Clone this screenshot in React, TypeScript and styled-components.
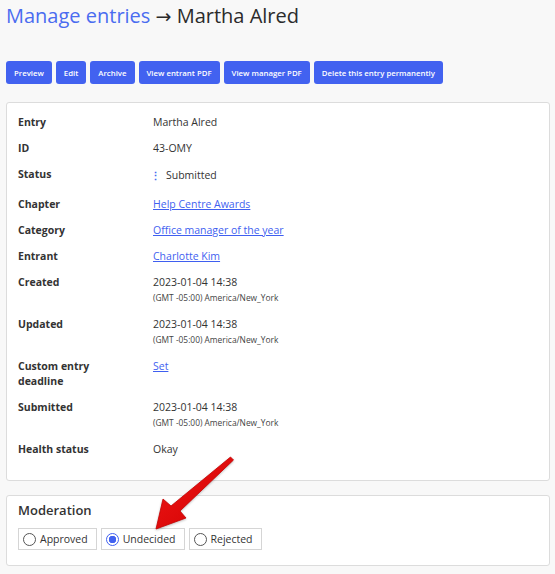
import React from 'react';
import styled, { createGlobalStyle } from 'styled-components';

const GlobalStyle = createGlobalStyle`
	html, body {
		margin: 0;
		padding: 0;
		background: #f8f8f8;
		font-family: 'Open Sans', 'Noto Sans', sans-serif;
		color: #333;
	}
`;

type Row = {
	label: string;
	value: string;
	sub?: string;
	link?: boolean;
	status?: boolean;
};

const ROWS: Row[] = [
	{ label: 'Entry', value: 'Martha Alred' },
	{ label: 'ID', value: '43-OMY' },
	{ label: 'Status', value: 'Submitted', status: true },
	{ label: 'Chapter', value: 'Help Centre Awards', link: true },
	{ label: 'Category', value: 'Office manager of the year', link: true },
	{ label: 'Entrant', value: 'Charlotte Kim', link: true },
	{ label: 'Created', value: '2023-01-04 14:38', sub: '(GMT -05:00) America/New_York' },
	{ label: 'Updated', value: '2023-01-04 14:38', sub: '(GMT -05:00) America/New_York' },
	{ label: 'Custom entry deadline', value: 'Set', link: true },
	{ label: 'Submitted', value: '2023-01-04 14:38', sub: '(GMT -05:00) America/New_York' },
	{ label: 'Health status', value: 'Okay' },
];

const BUTTONS = ['Preview', 'Edit', 'Archive', 'View entrant PDF', 'View manager PDF', 'Delete this entry permanently'];

const OPTIONS = ['Approved', 'Undecided', 'Rejected'];

const App = () => {
	return (
		<Page>
			<GlobalStyle />
			<Title>
				<a href="#">Manage entries</a> <TitleArrow>→</TitleArrow> Martha Alred
			</Title>
			<Toolbar>
				{BUTTONS.map((b) => (
					<ActionButton key={b}>{b}</ActionButton>
				))}
			</Toolbar>
			<Card>
				<DetailsGrid>
					{ROWS.map((r) => (
						<React.Fragment key={r.label}>
							<Label $status={r.status}>{r.label}</Label>
							<Value $status={r.status}>
								{r.status && <Dots>⋮</Dots>}
								{r.link ? <a href="#">{r.value}</a> : r.value}
								{r.sub && <Sub>{r.sub}</Sub>}
							</Value>
						</React.Fragment>
					))}
				</DetailsGrid>
			</Card>
			<ModerationCard>
				<CardTitle>Moderation</CardTitle>
				<RadioGroup>
					{OPTIONS.map((o) => (
						<RadioOption key={o}>
							<RadioCircle $checked={o === 'Undecided'} />
							{o}
						</RadioOption>
					))}
				</RadioGroup>
			</ModerationCard>
			{/* annotation arrow pointing at the selected option */}
			<Arrow width="100" height="90" viewBox="140 450 100 90">
				<defs>
					<linearGradient id="arrowFill" x1="0" y1="0" x2="1" y2="1">
						<stop offset="0" stopColor="#f01818" />
						<stop offset="1" stopColor="#d00000" />
					</linearGradient>
				</defs>
				<path
					d="M230.5 457 L233.5 460 L180 511 L186 518 L156 529 L163 499 L171 506 Z"
					fill="url(#arrowFill)"
					stroke="#c40000"
					strokeWidth="0.8"
					strokeLinejoin="round"
				/>
			</Arrow>
		</Page>
	);
};

export default App;

const Page = styled.div`
	position: relative;
	padding: 1px 5px 8px 6px;
	width: 544px;
`;

const Title = styled.h1`
	margin: 0 0 30px;
	font-size: 20px;
	font-weight: 400;
	line-height: 30px;
	color: #2b2b2b;

	& a {
		color: #4a6cf0;
		text-decoration: none;
	}
`;

const TitleArrow = styled.span`
	font-family: 'DejaVu Sans', sans-serif;
	font-size: 19px;
`;

const Toolbar = styled.div`
	display: flex;
	gap: 4px;
	margin-bottom: 18px;
`;

const ActionButton = styled.button`
	height: 23px;
	padding: 0 8px;
	border: none;
	border-radius: 3px;
	background: #4262f0;
	color: #fff;
	font-family: 'Open Sans', 'Noto Sans', sans-serif;
	font-size: 7.8px;
	font-weight: 600;
	cursor: pointer;
`;

const Card = styled.div`
	background: #fff;
	border: 1px solid #dcdcdc;
	border-radius: 3px;
	padding: 12px 11px 23px;
	margin-bottom: 14px;
`;

const DetailsGrid = styled.div`
	display: grid;
	grid-template-columns: 135px 1fr;
	row-gap: 11px;
	font-size: 10.5px;
	line-height: 15px;
`;

const Label = styled.div<{ $status?: boolean }>`
	font-weight: 700;
	color: #333;
	width: 80px;
	padding: ${(p) => (p.$status ? '0 0 4px' : '0')};
`;

const Value = styled.div<{ $status?: boolean }>`
	color: #333;
	padding: ${(p) => (p.$status ? '1px 0 3px' : '0')};

	& a {
		color: #3f5ff0;
		text-decoration: underline;
	}
`;

const Dots = styled.span`
	display: inline-block;
	color: #4a6cf0;
	font-weight: 700;
	margin-right: 5px;
	margin-left: -3px;
	transform: translateY(1px);
`;

const Sub = styled.div`
	font-size: 8.4px;
	line-height: 16px;
	color: #444;
`;

const ModerationCard = styled(Card)`
	padding: 5px 11px 15px;
	margin-bottom: 0;
`;

const CardTitle = styled.h2`
	margin: 0 0 9px;
	font-size: 13px;
	font-weight: 600;
	line-height: 18px;
	color: #333;
`;

const RadioGroup = styled.div`
	display: flex;
	gap: 4px;
`;

const RadioOption = styled.label`
	display: flex;
	align-items: center;
	gap: 4px;
	height: 20px;
	padding: 0 8px 0 4px;
	border: 1px solid #d5d5d5;
	font-size: 10.5px;
	color: #333;
	background: #fff;
`;

const RadioCircle = styled.span<{ $checked: boolean }>`
	width: 13px;
	height: 13px;
	border-radius: 50%;
	border: 1px solid ${(p) => (p.$checked ? '#4262f0' : '#555')};
	box-sizing: border-box;
	background: ${(p) => (p.$checked ? 'radial-gradient(circle, #4262f0 0 3.5px, #fff 4px)' : '#fff')};
`;

const Arrow = styled.svg`
	position: absolute;
	left: 140px;
	top: 450px;
	overflow: visible;
	filter: drop-shadow(0 1px 1px rgba(0, 0, 0, 0.25));
`;
